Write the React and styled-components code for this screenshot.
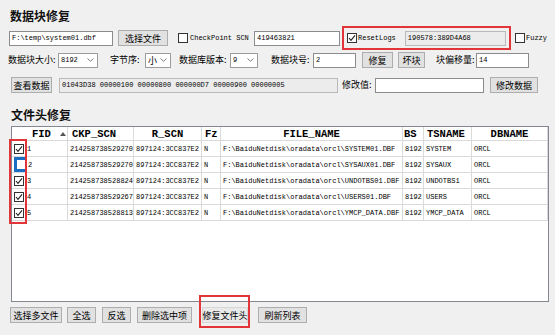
import React from 'react'
import styled, { createGlobalStyle } from 'styled-components'

const MONO = '"Liberation Mono", "DejaVu Sans Mono", monospace'
const CJK = '"Noto Sans CJK SC", "Liberation Sans", sans-serif'
const RED = '#e2353a'
const GRID = '#dadada'

const GlobalStyle = createGlobalStyle`
  html, body { margin: 0; padding: 0; background: #f0f0f0; }
  body { font-family: ${CJK}; font-size: 9px; color: #000; }
`

const Window = styled.div`
  width: 555px;
  height: 335px;
  overflow: hidden;
  background: #f0f0f0;
`

const Title = styled.div`
  height: 20px;
  line-height: 20px;
  padding: ${p => p.top}px 0 0 ${p => p.left}px;
  font-family: ${CJK};
  font-size: 12px;
  font-weight: bold;
  color: #111;
`

const Row = styled.div`
  display: flex;
  align-items: center;
  height: ${p => p.h}px;
  margin-top: ${p => p.mt || 0}px;
`

const Label = styled.span`
  flex: none;
  width: ${p => (p.w ? `${p.w}px` : 'auto')};
  margin-left: ${p => p.ml || 0}px;
  font-family: ${p => (p.mono ? MONO : CJK)};
  font-size: ${p => (p.mono ? 7 : 9)}px;
  white-space: nowrap;
  line-height: 12px;
`

const TextBox = styled.div`
  flex: none;
  box-sizing: border-box;
  width: ${p => p.w}px;
  height: 15px;
  margin-left: ${p => p.ml || 0}px;
  padding-left: 2px;
  border: 1px solid ${p => (p.gray ? '#b9b9b9' : '#8c8c8c')};
  background: ${p => (p.gray ? '#ececec' : '#fff')};
  font-family: ${MONO};
  font-size: 7px;
  line-height: 13px;
  white-space: nowrap;
  overflow: hidden;
`

const Btn = styled.div`
  flex: none;
  position: relative;
  box-sizing: border-box;
  width: ${p => p.w}px;
  height: 16px;
  margin-left: ${p => p.ml || 0}px;
  border: 1px solid ${p => (p.flat ? '#d6d6d6' : '#adadad')};
  background: ${p => (p.flat ? '#e9e9e9' : '#e1e1e1')};
  display: flex;
  align-items: center;
  justify-content: center;
  font-size: 9px;
  white-space: nowrap;
`

const BtnMark = styled.span`
  position: absolute;
  left: -4px;
  right: -3px;
  top: -13px;
  bottom: -6px;
  border: 2px solid ${RED};
`

const ComboBox = styled.div`
  flex: none;
  box-sizing: border-box;
  width: ${p => p.w}px;
  height: 15px;
  margin-left: ${p => p.ml || 0}px;
  border: 1px solid #9c9c9c;
  background: #fff;
  display: flex;
  align-items: center;
  justify-content: space-between;
  padding: 0 3px 0 2px;
  font-family: ${p => (p.cjk ? CJK : MONO)};
  font-size: ${p => (p.cjk ? 9 : 7)}px;
`

const Marked = styled.div`
  flex: none;
  box-sizing: border-box;
  display: flex;
  align-items: center;
  width: ${p => p.w}px;
  height: 24px;
  margin-left: ${p => p.ml || 0}px;
  border: 2px solid ${RED};
`

const Table = styled.div`
  position: relative;
  box-sizing: border-box;
  width: 538px;
  height: 176px;
  margin: 1px 0 0 11px;
  border: 1px solid #828790;
  background: #fff;
`

const COLS = '56px 66px 68px 19px 182px 21px 48px 76px'

const HeadRow = styled.div`
  display: grid;
  grid-template-columns: ${COLS};
  height: 13px;
  border-bottom: 1px solid ${GRID};
`

const HeadCell = styled.div`
  display: flex;
  align-items: center;
  justify-content: ${p => (p.center ? 'center' : 'flex-start')};
  padding-left: ${p => p.pl || 0}px;
  border-right: 1px solid ${GRID};
  font-family: ${MONO};
  font-size: 10.5px;
  font-weight: bold;
  white-space: nowrap;
  overflow: hidden;
`

const SortArrow = styled.svg`
  margin-left: 9px;
`

const BodyRow = styled.div`
  display: grid;
  grid-template-columns: ${COLS};
  height: 15px;
  border-bottom: 1px solid ${GRID};
`

const Cell = styled.div`
  display: flex;
  align-items: center;
  padding-left: ${p => p.pl || 0}px;
  border-right: 1px solid ${GRID};
  font-family: ${MONO};
  font-size: 7px;
  white-space: nowrap;
  overflow: hidden;
`

const FocusBox = styled.span`
  flex: none;
  display: flex;
  align-items: center;
  justify-content: center;
  width: 13px;
  height: 15px;
  margin-left: 1px;
  background: #1a6fc4;
`

const FocusInner = styled.span`
  width: 8px;
  height: 9px;
  background: #fff;
`

const CheckMark = styled.div`
  position: absolute;
  left: -3px;
  top: 12px;
  width: 18px;
  height: 85px;
  border: 2px solid ${RED};
  box-sizing: border-box;
`

const Check = ({ checked, ml }) => (
  <svg width="10" height="10" style={{ flex: 'none', marginLeft: ml || 0 }}>
    <rect x="0.5" y="0.5" width="9" height="9" fill="#fff" stroke="#333" />
    {checked && <polyline points="2,5 4,7.3 8,2.4" fill="none" stroke="#222" strokeWidth="1.1" />}
  </svg>
)

const Chevron = () => (
  <svg width="7" height="4" viewBox="0 0 7 4">
    <polyline points="0.5,0.5 3.5,3.3 6.5,0.5" fill="none" stroke="#6d6d6d" strokeWidth="0.9" />
  </svg>
)

const Combo = ({ w, ml, value, cjk }) => (
  <ComboBox w={w} ml={ml} cjk={cjk}>
    <span>{value}</span>
    <Chevron />
  </ComboBox>
)

const files = [
  { fid: 1, ckp: '214258738529270', file: 'SYSTEM01.DBF', ts: 'SYSTEM', on: true },
  { fid: 2, ckp: '214258738529270', file: 'SYSAUX01.DBF', ts: 'SYSAUX', on: false },
  { fid: 3, ckp: '214258738528824', file: 'UNDOTBS01.DBF', ts: 'UNDOTBS1', on: true },
  { fid: 4, ckp: '214258738529267', file: 'USERS01.DBF', ts: 'USERS', on: true },
  { fid: 5, ckp: '214258738528813', file: 'YMCP_DATA.DBF', ts: 'YMCP_DATA', on: true },
]

export default function App() {
  return (
    <Window>
      <GlobalStyle />
      <Title top={6} left={10}>数据块修复</Title>

      <Row h={24}>
        <TextBox w={104} ml={9}>F:\temp\system01.dbf</TextBox>
        <Btn w={50} ml={5}>选择文件</Btn>
        <Check ml={10} />
        <Label mono ml={2} w={62}>CheckPoint SCN</Label>
        <TextBox w={86} ml={2}>419463821</TextBox>
        <Marked w={169} ml={2}>
          <Check checked ml={3} />
          <Label mono ml={1}>ResetLogs</Label>
          <TextBox gray w={101} ml={9}>190578:389D4A68</TextBox>
        </Marked>
        <Check ml={4} />
        <Label mono ml={1}>Fuzzy</Label>
      </Row>

      <Row h={16} mt={2}>
        <Label ml={8} w={50}>数据块大小:</Label>
        <Combo w={40} value="8192" />
        <Label ml={12} w={33}>字节序:</Label>
        <Combo w={26} ml={2} value="小" cjk />
        <Label ml={8} w={51}>数据库版本:</Label>
        <Combo w={28} value="9" />
        <Label ml={13} w={42}>数据块号:</Label>
        <TextBox w={43}>2</TextBox>
        <Btn w={31} ml={6}>修复</Btn>
        <Btn w={27} ml={5}>坏块</Btn>
        <Label ml={11} w={40}>块偏移量:</Label>
        <TextBox w={53}>14</TextBox>
      </Row>

      <Row h={18} mt={8}>
        <Btn w={41} ml={11}>查看数据</Btn>
        <TextBox gray w={279} ml={7}>01043D38 00000100 00000800 000000D7 00000900 00000005</TextBox>
        <Label ml={4} w={33}>修改值:</Label>
        <TextBox w={109}></TextBox>
        <Btn w={48} ml={6}>修改数据</Btn>
      </Row>

      <Title top={11} left={11}>文件头修复</Title>

      <Table>
        <HeadRow>
          <HeadCell pl={20}>
            FID
            <SortArrow width="6" height="4" viewBox="0 0 6 4">
              <polygon points="0,4 3,0 6,4" fill="#555" />
            </SortArrow>
          </HeadCell>
          <HeadCell pl={4}>CKP_SCN</HeadCell>
          <HeadCell center>R_SCN</HeadCell>
          <HeadCell pl={3}>Fz</HeadCell>
          <HeadCell center>FILE_NAME</HeadCell>
          <HeadCell pl={1}>BS</HeadCell>
          <HeadCell pl={3}>TSNAME</HeadCell>
          <HeadCell center>DBNAME</HeadCell>
        </HeadRow>
        {files.map(f => (
          <BodyRow key={f.fid}>
            <Cell pl={1}>
              {f.on ? <Check checked ml={1} /> : <FocusBox><FocusInner /></FocusBox>}
              <span style={{ marginLeft: f.on ? 3 : 1 }}>{f.fid}</span>
            </Cell>
            <Cell pl={2}>{f.ckp}</Cell>
            <Cell pl={2}>897124:3CC837E2</Cell>
            <Cell pl={2}>N</Cell>
            <Cell pl={2}>{`F:\\BaiduNetdisk\\oradata\\orcl\\${f.file}`}</Cell>
            <Cell pl={2}>8192</Cell>
            <Cell pl={2}>{f.ts}</Cell>
            <Cell pl={2}>ORCL</Cell>
          </BodyRow>
        ))}
        <CheckMark />
      </Table>

      <Row h={16} mt={5}>
        <Btn w={52} ml={10}>选择多文件</Btn>
        <Btn w={29} ml={5}>全选</Btn>
        <Btn w={29} ml={6}>反选</Btn>
        <Btn w={55} ml={6}>删除选中项</Btn>
        <Btn w={46} ml={10} flat>
          修复文件头
          <BtnMark />
        </Btn>
        <Btn w={49} ml={10}>刷新列表</Btn>
      </Row>
    </Window>
  )
}
